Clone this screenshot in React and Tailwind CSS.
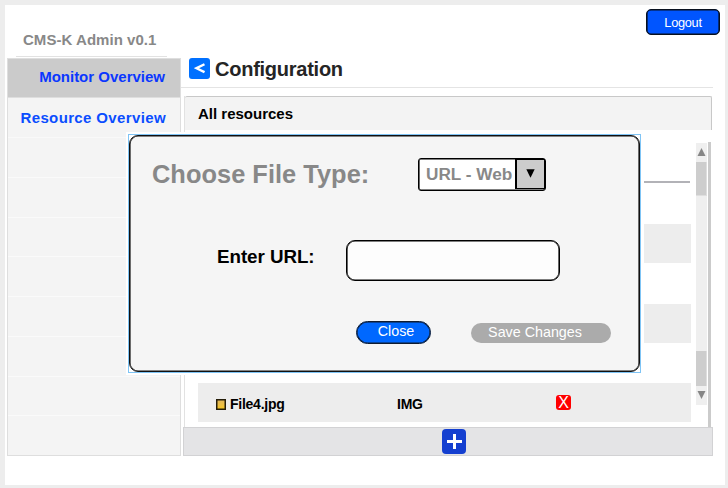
import React from "react";

const emptyNavRows = [0, 1, 2, 3, 4, 5, 6, 7];

function Sidebar() {
  return (
    <nav className="ml-[2px] flex h-[398px] w-[174px] shrink-0 flex-col border border-[#dedede] bg-[#f4f4f4] text-right text-[15px] font-bold">
      <a className="h-[39px] shrink-0 border-b border-[#dedede] bg-[#cbcbcb] pr-[15px] leading-[36px] text-[#0a37ff]">Monitor Overview</a>
      <a className="h-[40px] shrink-0 border-b border-[#f9f9f9] pt-px pr-[14px] leading-[38px] tracking-[0.37px] text-[#0a4dff]">Resource Overview</a>
      {emptyNavRows.map((n) => (
        <div key={n} className="min-h-0 flex-1 border-b border-[#fafafa] last:border-b-0" />
      ))}
    </nav>
  );
}

function FileRow({ name, type }) {
  return (
    <div className="flex h-[39px] w-[493px] items-center bg-[#ededed] pt-[3px] text-[14px] tracking-[-0.25px] font-bold text-black">
      {name && (
        <>
          <span className="ml-[18px] h-[11px] w-[10px] bg-linear-to-b from-[#dfb45c] to-[#f8c80e] shadow-[inset_0_0_0_1.5px_#241c08]" />
          <span className="ml-[4px] w-[167px]">{name}</span>
          <span className="w-[159px]">{type}</span>
          <button className="-mt-[3px] flex h-[15px] w-[15px] items-center justify-center rounded-[3px] bg-[#ff0000] text-[16px] leading-none font-normal text-white">X</button>
        </>
      )}
    </div>
  );
}

function Scrollbar() {
  return (
    <div className="mt-[13px] flex h-[262px] w-[11px] flex-col items-center bg-[#efefef]">
      <svg className="mt-[5px] h-[8px] w-[9px]" viewBox="0 0 9 8"><path d="M4.5 0L8.5 8H.5Z" fill="#868686" /></svg>
      <div className="mt-[6px] h-[34px] w-[11px] border-b border-r border-[#dedede] bg-[#cdcdcd]" />
      <div className="flex-1" />
      <div className="h-[35px] w-[11px] border-r border-[#dedede] bg-[#cdcdcd]" />
      <svg className="mt-[5px] mb-[6px] h-[8px] w-[9px] shrink-0" viewBox="0 0 9 8"><path d="M4.5 8L8.5 0H.5Z" fill="#868686" /></svg>
    </div>
  );
}

function Dialog() {
  return (
    <div className="absolute top-[132px] left-[126px] h-[243px] w-[518px] bg-white pt-[2px] pl-[2px]">
      <div className="h-[239px] w-[513px] border border-[#7fc4f5] bg-white">
        <div className="flex h-[237px] w-[511px] flex-col rounded-[9px] border border-[#101010] bg-[#f5f5f5] shadow-[inset_0_0_0_0.6px_#101010]">
          <div className="flex pt-[22px] pl-[22px]">
            <h2 className="w-[266px] pt-px text-[25.4px] leading-[30px] font-bold tracking-[0.03px] text-[#888]">Choose File Type:</h2>
            <div className="flex h-[33px] w-[128px] rounded-[3px] border border-black bg-white shadow-[inset_0_0_0_0.6px_#000]">
              <span className="w-[96px] pt-px pl-[7px] text-[17.2px] leading-[29px] font-bold whitespace-nowrap text-[#888]">URL - Web</span>
              <span className="flex h-[30px] w-[30px] shrink-0 items-start justify-center border border-l-2 border-black bg-[#ccc] pt-[9px]">
                <svg className="h-[9px] w-[9px]" viewBox="0 0 9 9"><path d="M.3.3H8.7L4.5 8.7Z" /></svg>
              </span>
            </div>
          </div>
          <div className="flex pt-[49px] pl-[87px]">
            <label className="w-[129px] text-[18.8px] leading-[34px] font-bold tracking-[-0.05px] text-black">Enter URL:</label>
            <input className="h-[41px] w-[214px] rounded-[9px] border border-black bg-[#fdfdfd] shadow-[inset_0_0_0_0.6px_#000]" />
          </div>
          <div className="flex items-start pt-[39px] pl-[226px]">
            <button className="mt-px h-[23px] w-[75px] rounded-full border border-[#101c30] bg-[#0068ff] pb-[2px] pl-[5px] text-[14.3px] leading-[17px] text-white shadow-[inset_0_0_0_0.6px_#101c30]">Close</button>
            <button className="mt-[3px] ml-[40px] h-[20px] w-[140px] rounded-full bg-[#ababab] pr-[12px] pb-[2px] text-[14.3px] leading-[17px] text-white">Save Changes</button>
          </div>
        </div>
      </div>
    </div>
  );
}

export default function App() {
  return (
    <div className="relative h-[488px] w-[728px] overflow-hidden bg-[#ededed] pt-[5px] pl-[5px] font-['Liberation_Sans',Arial,sans-serif] whitespace-nowrap">
      <div className="flex h-[480px] w-[720px] flex-col bg-white">
        <header className="flex h-[53px] shrink-0 justify-between">
          <h1 className="mt-[25px] ml-[11px] h-[27px] w-[151px] border-b border-[#e2e2e2] pl-[7px] text-[15px] leading-[20px] font-bold tracking-[0.04px] text-[#888]">CMS-K Admin v0.1</h1>
          <button className="mt-[4px] mr-[5px] h-[26px] w-[74px] rounded-[5px] border border-[#08101e] bg-[#0055ff] text-[12.8px] leading-[23px] tracking-[-0.3px] text-white shadow-[inset_0_0_0_0.6px_#08101e]">Logout</button>
        </header>
        <div className="flex">
          <Sidebar />
          <main className="flex w-[532px] flex-col">
            <div className="flex h-[30px] shrink-0 items-start border-b border-[#e4e4e4] pl-[8px]">
              <button className="flex h-[21px] w-[21px] items-center justify-center rounded-[3px] bg-[#0070ff]">
                <svg className="h-[11px] w-[11px]" viewBox="0 0 11 11"><path d="M10.5 1.2L2.5 5.2L10.5 9.2" fill="none" stroke="white" strokeWidth="2.4" /></svg>
              </button>
              <h2 className="ml-[5px] text-[20px] leading-[22px] font-bold tracking-[-0.25px] text-[#252525]">Configuration</h2>
            </div>
            <section className="mt-[8px] ml-[3px] flex h-[331px] w-[528px] flex-col border-l border-[#e2e2e2]">
              <h3 className="h-[34px] shrink-0 rounded-t-[2px] border-t border-r border-[#c8c8c8] bg-[#f3f3f3] pl-[13px] text-[15px] leading-[34px] font-bold text-black">All resources</h3>
              <div className="flex h-[297px]">
                <div className="flex w-[511px] flex-col pl-[13px]">
                  <div className="mt-[51px] mb-[41px] h-[2px] w-[492px] shrink-0 bg-[#b2b2b7]" />
                  <div className="flex flex-col gap-[40.5px]">
                    <FileRow />
                    <FileRow />
                    <FileRow name="File4.jpg" type="IMG" />
                  </div>
                </div>
                <Scrollbar />
                <div className="mt-[12px] ml-px h-[285px] w-[3px] bg-[#cbcbcb]" />
              </div>
            </section>
            <footer className="ml-[2px] flex h-[29px] w-[530px] items-center border border-[#d2d2d4] bg-[#e4e4e6] pl-[258px]">
              <button className="flex h-[25px] w-[24px] items-center justify-center rounded-[4px] bg-[#143fd0]">
                <svg className="h-[15px] w-[15px]" viewBox="0 0 15 15"><path d="M0 7.5H15M7.5 0V15" stroke="white" strokeWidth="3" /></svg>
              </button>
            </footer>
          </main>
        </div>
      </div>
      <Dialog />
    </div>
  );
}
